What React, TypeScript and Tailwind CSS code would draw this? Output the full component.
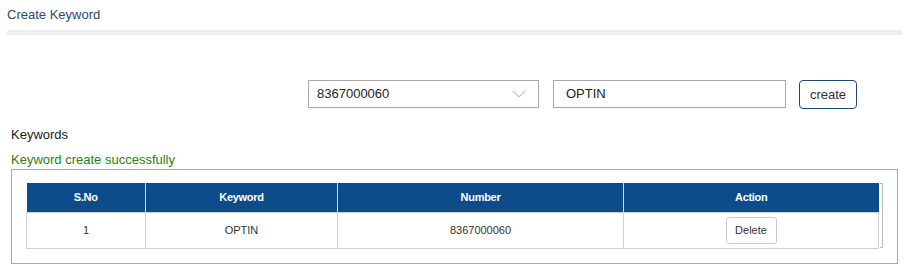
import React from "react";

export default function App() {
  const cols = [
    { label: "S.No", w: "w-[119px]" },
    { label: "Keyword", w: "w-[192px]" },
    { label: "Number", w: "w-[286px]" },
    { label: "Action", w: "w-[255px]" },
  ];
  return (
    <div className="font-['Liberation_Sans',Arial,sans-serif] w-[907px] h-[270px] bg-white overflow-hidden">
      <div className="px-[7px] pt-[7px]">
        <div className="text-[13px] leading-[16px] text-[#2b4a72]">Create Keyword</div>
        <div className="mt-[7px] h-[5px] w-[895px] bg-[#efefef]" />

        <div className="mt-[45px] ml-[301px] flex items-start">
          <div className="w-[231px] h-[28px] border border-[#a9a9a9] flex items-center justify-between pl-[8px] pr-[12px]">
            <span className="text-[13px] text-[#222]">8367000060</span>
            <svg width="14" height="8" viewBox="0 0 14 8" fill="none">
              <polyline points="1,1 7,7 13,1" stroke="#c4c4c4" strokeWidth="1.2" />
            </svg>
          </div>
          <div className="ml-[14px] w-[233px] h-[28px] border border-[#a9a9a9] flex items-center pl-[12px]">
            <span className="text-[13px] text-[#222]">OPTIN</span>
          </div>
          <button className="ml-[13px] w-[58px] h-[29px] rounded-[4px] border border-[#1f4a70] text-[13px] text-[#333] bg-white flex items-center justify-center">
            create
          </button>
        </div>

        <div className="mt-[18px] ml-[4px] text-[13px] leading-[16px] text-[#222]">Keywords</div>
        <div className="mt-[9px] ml-[4px] text-[13px] leading-[16px] text-[#2e7d14]">Keyword create successfully</div>

        <div className="mt-[1px] ml-[4px] w-[887px] h-[95px] border border-[#aaaaaa] pl-[14px] pt-[13px] flex items-start">
          <table className="border-collapse table-fixed w-[852px]">
            <thead>
              <tr className="h-[29px] bg-[#0d4c8a]">
                {cols.map((c, i) => (
                  <th
                    key={c.label}
                    className={`${c.w} text-[11px] font-bold text-white text-center tracking-[-0.3px] ${i > 0 ? "border-l border-[#d9d9d9]" : ""}`}
                  >
                    {c.label}
                  </th>
                ))}
              </tr>
            </thead>
            <tbody>
              <tr className="h-[36px]">
                <td className="border border-[#cfcfcf] text-center text-[11px] text-[#333]">1</td>
                <td className="border border-[#cfcfcf] text-center text-[11px] text-[#333]">OPTIN</td>
                <td className="border border-[#cfcfcf] text-center text-[11px] text-[#333]">8367000060</td>
                <td className="border border-[#cfcfcf] text-center">
                  <button className="w-[51px] h-[27px] border border-[#cccccc] rounded-[3px] bg-white text-[11px] text-[#333] inline-flex items-center justify-center">
                    Delete
                  </button>
                </td>
              </tr>
            </tbody>
          </table>
          <div className="ml-[1px] h-[65px] w-[3px] border-r border-t border-b border-[#bbbbbb]" />
        </div>
      </div>
    </div>
  );
}
